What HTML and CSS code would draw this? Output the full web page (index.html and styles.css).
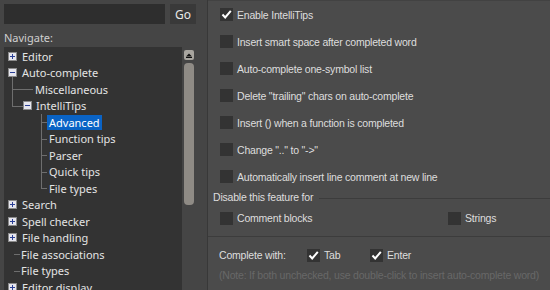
FILE: index.html
```html
<!DOCTYPE html>
<html>
<head>
<meta charset="utf-8">
<link rel="stylesheet" href="styles.css">
</head>
<body>
<div class="app">
  <aside class="left">
    <div class="search">
      <div class="input"></div>
      <div class="go">Go</div>
    </div>
    <div class="navlabel">Navigate:</div>
    <div class="tree">
      <div class="list">
        <div class="row l1"><span class="box plus"></span><span class="t">Editor</span></div>
        <div class="row l1 vdown"><span class="box minus"></span><span class="t">Auto-complete</span></div>
        <div class="row l2 vfull stub2"><span class="t">Miscellaneous</span></div>
        <div class="row l2b vhalf stub2b"><span class="box minus"></span><span class="t">IntelliTips</span></div>
        <div class="row l3 v3full stub3"><span class="t sel">Advanced</span></div>
        <div class="row l3 v3full stub3"><span class="t">Function tips</span></div>
        <div class="row l3 v3full stub3"><span class="t">Parser</span></div>
        <div class="row l3 v3full stub3"><span class="t">Quick tips</span></div>
        <div class="row l3 v3half stub3"><span class="t">File types</span></div>
        <div class="row l1"><span class="box plus"></span><span class="t">Search</span></div>
        <div class="row l1"><span class="box plus"></span><span class="t">Spell checker</span></div>
        <div class="row l1"><span class="box plus"></span><span class="t">File handling</span></div>
        <div class="row l1c stub1"><span class="t">File associations</span></div>
        <div class="row l1c stub1"><span class="t">File types</span></div>
        <div class="row l1"><span class="box plus"></span><span class="t">Editor display</span></div>
      </div>
      <div class="scroll">
        <div class="sbtn"><svg width="10" height="10" viewBox="0 0 10 10"><path d="M2 6.5 L5 3.5 L8 6.5 Z" fill="#111"/><rect x="2" y="7" width="6" height="1" fill="#111"/></svg></div>
        <div class="thumb"></div>
      </div>
    </div>
  </aside>
  <main class="right">
    <div class="opt"><span class="cb on"><svg width="13" height="13" viewBox="0 0 13 13"><path d="M2.5 6.5 L5.2 9.5 L10.8 2.8" fill="none" stroke="#fff" stroke-width="2"/></svg></span><span>Enable IntelliTips</span></div>
    <div class="opt"><span class="cb"></span><span>Insert smart space after completed word</span></div>
    <div class="opt"><span class="cb"></span><span>Auto-complete one-symbol list</span></div>
    <div class="opt"><span class="cb"></span><span>Delete "trailing" chars on auto-complete</span></div>
    <div class="opt"><span class="cb"></span><span>Insert () when a function is completed</span></div>
    <div class="opt"><span class="cb"></span><span>Change ".." to "-&gt;"</span></div>
    <div class="opt"><span class="cb"></span><span>Automatically insert line comment at new line</span></div>
    <div class="legend">Disable this feature for</div>
    <div class="grouprow">
      <div class="gopt comment"><span class="cb"></span><span>Comment blocks</span></div>
      <div class="gopt"><span class="cb"></span><span>Strings</span></div>
    </div>
    <div class="sep"></div>
    <div class="complete">
      <span class="cw">Complete with:</span>
      <span class="copt tab"><span class="cb on"><svg width="13" height="13" viewBox="0 0 13 13"><path d="M2.5 6.5 L5.2 9.5 L10.8 2.8" fill="none" stroke="#fff" stroke-width="2"/></svg></span><span>Tab</span></span>
      <span class="copt"><span class="cb on"><svg width="13" height="13" viewBox="0 0 13 13"><path d="M2.5 6.5 L5.2 9.5 L10.8 2.8" fill="none" stroke="#fff" stroke-width="2"/></svg></span><span>Enter</span></span>
    </div>
    <div class="note">(Note: If both unchecked, use double-click to insert auto-complete word)</div>
  </main>
</div>
</body>
</html>
```
FILE: styles.css
```css
html, body { margin: 0; padding: 0; }
body { width: 550px; height: 290px; overflow: hidden; background: #4b4b4b; }
.app { display: flex; height: 290px; }

.left {
  width: 192px; padding: 4px 11px 0 4px; background: #454545;
  border-right: 1px solid #383838;
  font-family: "Noto Sans", sans-serif; font-size: 11px; color: #e4e4e4;
}
.search { display: flex; height: 20px; gap: 5px; }
.input { width: 161px; background: #2e2e2e; }
.go { width: 26px; background: #393939; display: flex; align-items: center; justify-content: center; color: #e8e8e8; font-size: 12px; }
.navlabel { height: 23px; line-height: 27px; color: #cfcfcf; font-size: 11px; }
.tree { display: flex; height: 250px; background: #333333; }
.list { flex: 1; padding-top: 1px; }
.row { height: 16.5px; display: flex; align-items: center; position: relative; white-space: nowrap; }
.row .t { padding: 0 2px; line-height: 15px; }
.row .sel { background: #0a63c5; color: #fff; }
.l1 { padding-left: 4px; }
.l1 .box { margin-right: 3px; }
.l1c { padding-left: 15px; }
.l2 { padding-left: 29px; }
.l2b { padding-left: 19px; }
.l2b .box { margin-right: 2px; }
.l3 { padding-left: 43px; }

.box { width: 9px; height: 9px; box-sizing: border-box; border: 1px solid #8a8a8a; background: #e6e6ee; position: relative; flex: none; }
.box::before { content: ""; position: absolute; left: 1px; top: 3px; width: 5px; height: 1px; background: #2a3f95; }
.plus::after { content: ""; position: absolute; left: 3px; top: 1px; width: 1px; height: 5px; background: #2a3f95; }

/* tree connector lines */
.vdown::after, .vfull::after, .vhalf::after, .v3full::after, .v3half::after {
  content: ""; position: absolute; border-left: 1px solid #6e6e6e;
}
.vdown::after { left: 8px; top: 12px; bottom: 0; }
.vfull::after { left: 8px; top: 0; bottom: 0; }
.vhalf::after { left: 8px; top: 0; height: 8px; }
.v3full::after { left: 37px; top: 0; bottom: 0; }
.v3half::after { left: 37px; top: 0; height: 8px; }
.stub1::before, .stub2::before, .stub2b::before, .stub3::before {
  content: ""; position: absolute; top: 8px; border-top: 1px solid #6e6e6e;
}
.stub1::before { left: 10px; width: 6px; }
.stub2::before { left: 8px; width: 21px; }
.stub2b::before { left: 8px; width: 11px; }
.stub3::before { left: 37px; width: 6px; }

.scroll { width: 14px; background: #454545; display: flex; flex-direction: column; align-items: center; padding-top: 3px; }
.sbtn { width: 10px; height: 10px; background: #a8a59f; border-radius: 2px; display: flex; }
.thumb { width: 10px; height: 142px; margin-top: 3px; background: #8f8b85; border-radius: 4px; }

.right {
  flex: 1; padding-top: 0; border-top: 1px solid #424242;
  font-family: "Liberation Sans", Arial, sans-serif; font-size: 10.5px; letter-spacing: -0.2px; color: #dedede;
}
.opt { height: 27px; display: flex; align-items: center; padding-left: 12px; }
.cb { width: 13px; height: 13px; background: #333333; display: inline-flex; flex: none; margin-right: 4px; }
.legend { height: 14px; line-height: 14px; display: flex; align-items: center; padding-left: 5px; white-space: nowrap; }
.legend::after { content: ""; flex: 1; border-top: 1px solid #3c3c3c; margin-left: 6px; margin-top: 2px; }
.grouprow { display: flex; height: 14px; margin-top: 7px; padding-left: 12px; }
.gopt { display: flex; align-items: center; }
.comment { width: 228px; }
.sep { margin-top: 11px; border-top: 1px solid #3c3c3c; }
.complete { height: 14px; margin-top: 11px; display: flex; align-items: center; padding-left: 11px; }
.cw { width: 88px; }
.copt { display: flex; align-items: center; }
.tab { width: 63px; }
.note { margin-top: 6px; padding-left: 11px; color: #686868; height: 14px; line-height: 14px; white-space: nowrap; }
```
